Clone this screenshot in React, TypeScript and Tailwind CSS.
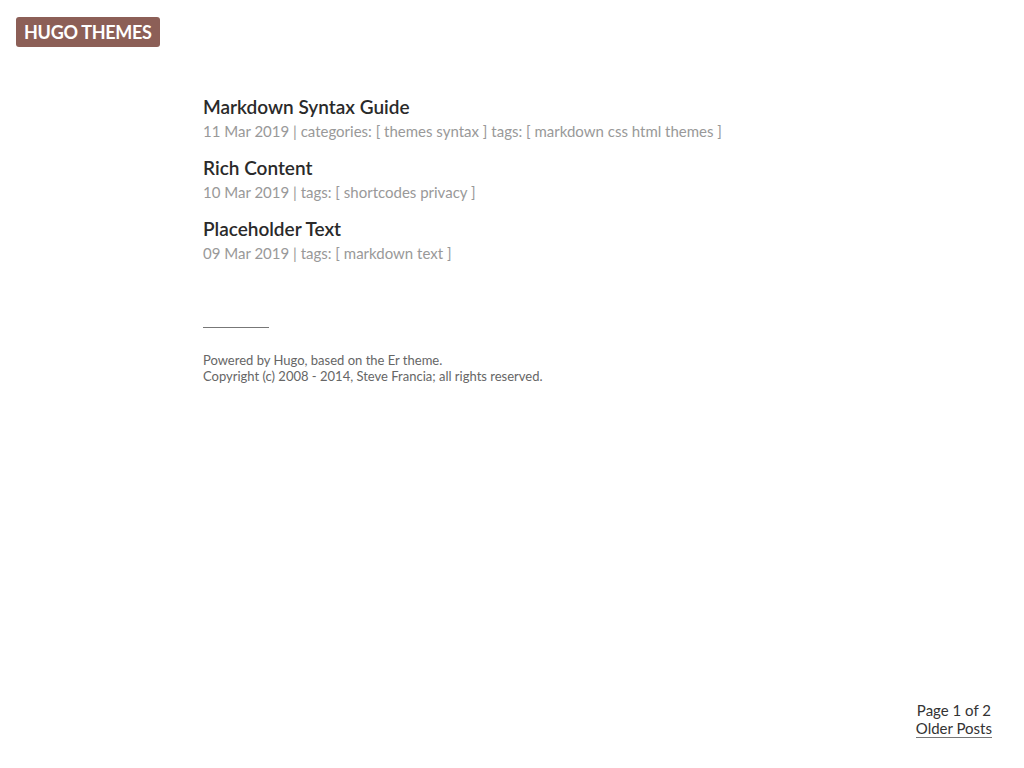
const POSTS = [
  {
    title: 'Markdown Syntax Guide',
    date: '11 Mar 2019',
    categories: ['themes', 'syntax'],
    tags: ['markdown', 'css', 'html', 'themes'],
  },
  {
    title: 'Rich Content',
    date: '10 Mar 2019',
    categories: [],
    tags: ['shortcodes', 'privacy'],
  },
  {
    title: 'Placeholder Text',
    date: '09 Mar 2019',
    categories: [],
    tags: ['markdown', 'text'],
  },
]

export default function App() {
  return (
    <div className="flex min-h-[768px] flex-col bg-white font-['Lato',sans-serif] text-[#333]">
      <header className="px-4 pt-[17px]">
        <a
          href="#"
          className="inline-block rounded-[3px] bg-[#8c5f57] px-2 text-[18px] font-bold leading-[30px] tracking-[-0.3px] text-white"
        >
          HUGO THEMES
        </a>
      </header>

      <main className="pl-[203px] pt-[47px]">
        {POSTS.map(post => (
          <article key={post.title} className="mb-[13px]">
            <h2 className="text-[19px] font-semibold leading-[26px] text-[#2a2a2a]">{post.title}</h2>
            <div className="text-[15px] leading-[22px] text-[#999]">
              {post.date} |{' '}
              {post.categories.length > 0 && (
                <>categories: [ {post.categories.join(' ')} ] </>
              )}
              tags: [ {post.tags.join(' ')} ]
            </div>
          </article>
        ))}

        <footer className="pt-[50px]">
          <hr className="w-[66px] border-t border-[#777]" />
          <div className="pt-[24px] text-[13px] leading-[16px] text-[#666]">
            <p>Powered by Hugo, based on the Er theme.</p>
            <p>Copyright (c) 2008 - 2014, Steve Francia; all rights reserved.</p>
          </div>
        </footer>
      </main>

      <nav className="mt-auto flex flex-col items-end pb-[30px] pr-8 text-[15px] leading-[18px] text-[#333]">
        <div className="flex flex-col items-center">
          <span>Page 1 of 2</span>
          <a href="#" className="border-b border-[#777]">Older Posts</a>
        </div>
      </nav>
    </div>
  )
}
